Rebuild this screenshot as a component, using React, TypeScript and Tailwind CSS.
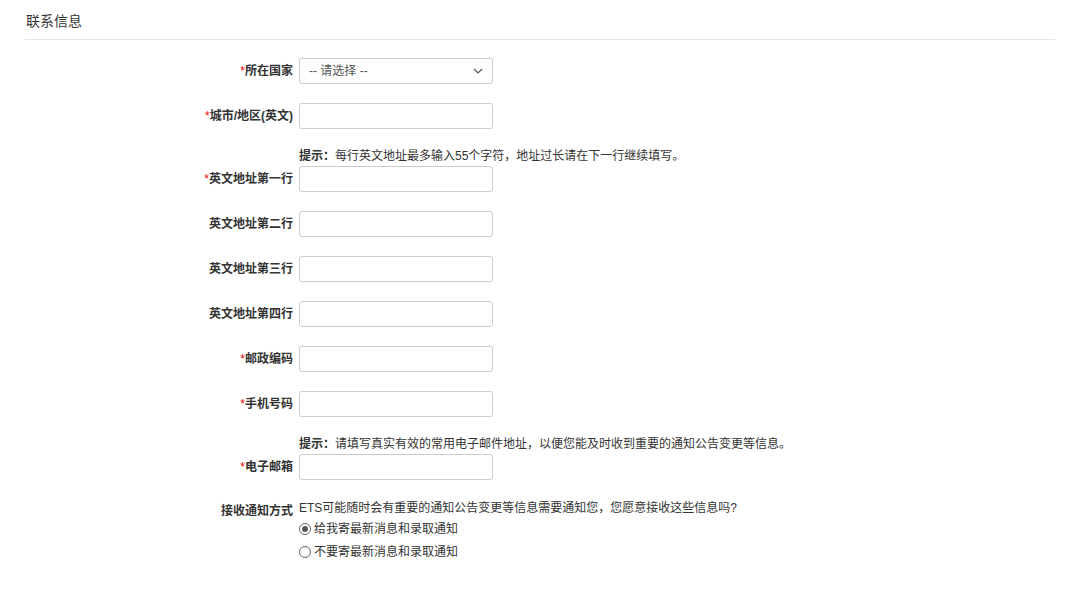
const F = { fontFamily: '"Liberation Sans", "Noto Sans CJK SC", sans-serif' };

function Label({ req, text }: { req?: boolean; text: string }) {
  return (
    <div className="w-[293px] shrink-0 text-right text-[12px] font-bold text-[#333] leading-[16px]">
      {req && <span className="text-[#e00] font-normal">*</span>}
      {text}
    </div>
  );
}

function Input() {
  return <div className="w-[194px] h-[26px] border border-[#ccc] rounded-[3px] bg-white" />;
}

function Row({ req, text, hint, first }: { req?: boolean; text: string; hint?: string; first?: boolean }) {
  return (
    <div className={first ? "" : hint ? "mt-[19px]" : "mt-[19px]"}>
      {hint && (
        <div className="pl-[299px] text-[12px] leading-[16px] text-[#333] mb-[2px]">
          <b>提示：</b>
          {hint}
        </div>
      )}
      <div className="flex items-center gap-[6px]">
        <Label req={req} text={text} />
        <Input />
      </div>
    </div>
  );
}

function Radio({ on, text }: { on?: boolean; text: string }) {
  return (
    <div className="flex items-center gap-[3px] text-[12px] leading-[16px] text-[#333] h-[23px]">
      <span className="w-[12px] h-[12px] rounded-full border border-[#666] flex items-center justify-center bg-white">
        {on && <span className="w-[6px] h-[6px] rounded-full bg-[#555]" />}
      </span>
      {text}
    </div>
  );
}

export default function App() {
  return (
    <div style={F} className="w-[1080px] h-[602px] bg-white">
      <div className="px-[25px] pt-[11px]">
        <div className="text-[14px] leading-[20px] text-[#333] pl-[1px]">联系信息</div>
        <div className="mt-[8px] border-b border-[#e5e5e5]" />
      </div>
      <div className="pt-[18px]">
        <div className="flex items-center gap-[6px]">
          <Label req text="所在国家" />
          <div className="w-[194px] h-[26px] border border-[#ccc] rounded-[3px] bg-white flex items-center justify-between px-[9px] text-[12px] text-[#555]">
            <span>-- 请选择 --</span>
            <svg width="10" height="6" viewBox="0 0 10 6"><path d="M1 1l4 4 4-4" fill="none" stroke="#555" strokeWidth="1.2" /></svg>
          </div>
        </div>
        <Row req text="城市/地区(英文)" />
        <Row req text="英文地址第一行" hint="每行英文地址最多输入55个字符，地址过长请在下一行继续填写。" />
        <Row text="英文地址第二行" />
        <Row text="英文地址第三行" />
        <Row text="英文地址第四行" />
        <Row req text="邮政编码" />
        <Row req text="手机号码" />
        <Row req text="电子邮箱" hint="请填写真实有效的常用电子邮件地址，以便您能及时收到重要的通知公告变更等信息。" />
        <div className="flex gap-[6px] mt-[20px]">
          <div className="pt-[3px]"><Label text="接收通知方式" /></div>
          <div>
            <div className="text-[12px] leading-[16px] text-[#333] mb-[1px]">ETS可能随时会有重要的通知公告变更等信息需要通知您，您愿意接收这些信息吗?</div>
            <Radio on text="给我寄最新消息和录取通知" />
            <Radio text="不要寄最新消息和录取通知" />
          </div>
        </div>
      </div>
    </div>
  );
}
